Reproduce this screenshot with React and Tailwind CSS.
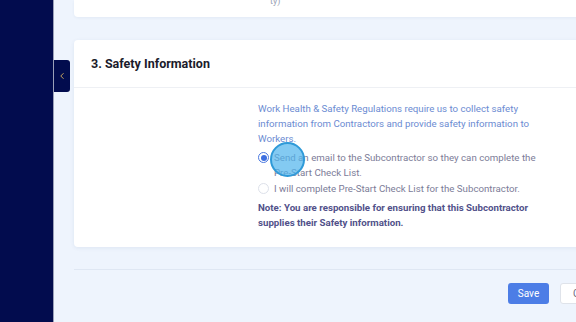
import { ChevronLeft } from 'lucide-react';

const NAVY = '#020c4e';

function Radio({ checked }) {
  return (
    <span
      className={`mt-[2px] flex h-[11px] w-[11px] shrink-0 items-center justify-center rounded-full border bg-white ${
        checked ? 'border-[#4a78e0]' : 'border-[#dde1ea]'
      }`}
    >
      {checked && <span className="h-[6px] w-[6px] rounded-full bg-[#3d6fe0]" />}
    </span>
  );
}

export default function App() {
  return (
    <div
      className="relative flex h-[322px] w-[576px] overflow-hidden bg-[#eef4fd]"
      style={{ fontFamily: 'Roboto, "Liberation Sans", sans-serif' }}
    >
      {/* sidebar */}
      <aside className="w-[54px] shrink-0 border-r border-[#9aa0b8] bg-[#020c4e]" />

      {/* collapse tab */}
      <button
        className="absolute left-[54px] top-[60px] flex h-[32px] w-[16px] items-center justify-center rounded-r-[3px]"
        style={{ background: NAVY }}
      >
        <ChevronLeft size={10} strokeWidth={2.25} className="text-[#d2ad5e]" />
      </button>

      <main className="flex flex-1 flex-col pl-[20px]">
        {/* previous card, cut off at the top */}
        <div className="-mr-[20px] h-[17px] overflow-hidden rounded-b-[4px] bg-white shadow-[0_1px_3px_rgba(30,60,120,0.06)]">
          <p className="-mt-[4px] pl-[196px] text-[9px] leading-[10px] text-[#9aa3b5]">ty)</p>
        </div>

        {/* safety card */}
        <section className="-mr-[20px] mt-[23px] rounded-[4px] bg-white shadow-[0_1px_4px_rgba(30,60,120,0.08)]">
          <header className="flex h-[48px] items-center border-b border-[#eef0f4] pl-[17px] pt-[1px]">
            <h2 className="text-[12.5px] font-bold text-[#1b1b2b]">3. Safety Information</h2>
          </header>
          <div className="pb-[17px] pl-[184px] pt-[13px]">
            <div className="w-[282px] text-[9.7px] leading-[15px]">
              <p className="text-[#6b8bd2]">
                Work Health &amp; Safety Regulations require us to collect safety information from Contractors and
                provide safety information to Workers.
              </p>
              <label className="mt-[4px] flex gap-[5px] text-[#7c7c98]">
                <Radio checked />
                <span>Send an email to the Subcontractor so they can complete the Pre-Start Check List.</span>
              </label>
              <label className="mt-[1px] flex gap-[5px] text-[#7c7c98]">
                <Radio />
                <span>I will complete Pre-Start Check List for the Subcontractor.</span>
              </label>
              <p className="mt-[4px] font-bold text-[#51518a]">
                Note: You are responsible for ensuring that this Subcontractor supplies their Safety information.
              </p>
            </div>
          </div>
        </section>

        <div className="mt-[22px] h-px bg-[#dfe7f3]" />

        <div className="mt-[13px] flex justify-end gap-[11px]">
          <button className="h-[21px] w-[41px] rounded-[3px] bg-[#4c7de6] text-[10px] text-white">Save</button>
          <button className="-mr-[36px] h-[21px] w-[52px] rounded-[3px] border border-[#dfe3ea] bg-white pl-[12px] text-left text-[10px] text-[#6b6b80]">
            Cancel
          </button>
        </div>
      </main>

      {/* click marker */}
      <span className="absolute left-[270px] top-[142px] h-[35px] w-[35px] rounded-full border-2 border-[#2f9ad8] bg-[#4fb3ec]/70" />
    </div>
  );
}
